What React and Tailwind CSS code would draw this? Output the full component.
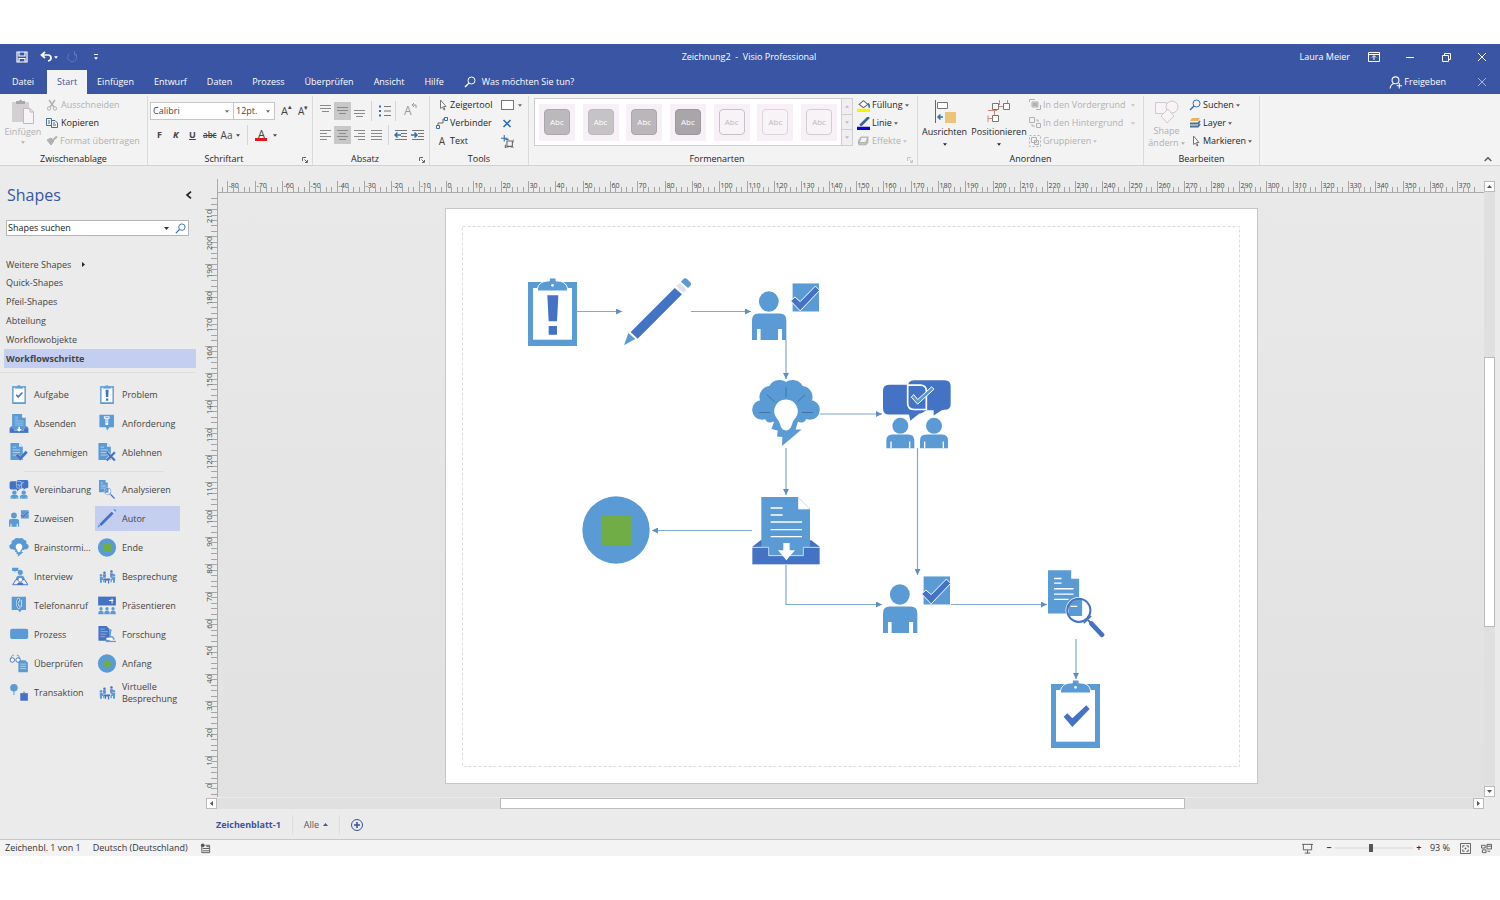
import React, { useState } from "react";
import clsx from "clsx";

const LIGHT = "#5b9bd5";
const DARK = "#4472c4";

/* ---------- shape drawings ---------- */

const Clipboard = () => (
  <>
    <rect y="12" width="147" height="192" fill={LIGHT} />
    <rect x="15" y="30" width="117" height="155" fill="#fff" />
    <path d="M28 39C28 20 40 10 58 9H64V0H84V9H90C108 10 119 20 119 39Z" fill={LIGHT} stroke="#fff" strokeWidth="3" />
    <circle cx="73.5" cy="22" r="4" fill="#fff" />
  </>
);

const Doc = () => (
  <>
    <path d="M3 0H30L42 12V54H3Z" fill={LIGHT} />
    <path d="M30 0V12H42Z" fill="#fff" opacity=".8" />
    <path d="M10 13H21M10 22H33M10 30H33M10 38H28" stroke="#fff" strokeWidth="2" opacity=".8" />
  </>
);

const SHAPES = {
  problem: {
    box: "0 0 147 204",
    body: (
      <>
        <Clipboard />
        <path d="M58 52H91L87 130H62ZM62 144H87V170H62Z" fill={DARK} />
      </>
    ),
  },
  task: {
    box: "0 0 147 204",
    body: (
      <>
        <Clipboard />
        <path d="M38 110L49 100L64 115L106 76L116 87L64 141Z" fill={DARK} />
      </>
    ),
  },
  author: {
    box: "0 0 204 204",
    body: (
      <>
        <path d="M0 202L13 165L34 183Z" fill={LIGHT} />
        <path d="M20 162L152 30L174 49L41 182Z" fill={DARK} />
        <path d="M157 24L167 15L188 36L178 45Z" fill="#dce3ee" />
        <path d="M171 11L178 3Q184 -2 190 4L198 12Q204 18 199 23L192 30Z" fill={LIGHT} />
      </>
    ),
  },
  assign: {
    box: "0 0 206 172",
    body: (
      <>
        <ellipse cx="51" cy="56" rx="30" ry="31" fill={LIGHT} />
        <path d="M0 172V112Q0 92 20 92H84Q104 92 104 112V172H91V139H79V172H26V139H15V172Z" fill={LIGHT} />
        <path d="M123 1H203V86H123Z" fill={LIGHT} />
        <path d="M117 54L130 42L146 56L192 9L205 22L146 84Z" fill={DARK} stroke="#fff" strokeWidth="3" />
      </>
    ),
  },
  brainstorm: {
    box: "0 0 204 202",
    body: (
      <>
        <g fill={LIGHT}>
          <circle cx="30" cy="90" r="30" />
          <circle cx="55" cy="51" r="33" />
          <circle cx="82" cy="34" r="34" />
          <circle cx="122" cy="34" r="34" />
          <circle cx="149" cy="51" r="33" />
          <circle cx="174" cy="90" r="30" />
          <circle cx="54" cy="112" r="16" />
          <circle cx="148" cy="112" r="16" />
          <path d="M40 50H164L150 120L138 126L131 149H149L90 199L91 172L75 170L77 152L58 148L66 126L48 120Z" />
        </g>
        <path d="M102 59A35 35 0 0 1 131 114Q122 124 119 136Q116 152 102 152Q88 152 85 136Q82 124 73 114A35 35 0 0 1 102 59Z" fill="#fff" />
        <path d="M102 22V52M44 44L68 66M160 44L136 66M20 98H54M150 98H184" stroke="#3f72ad" strokeWidth="3" fill="none" />
      </>
    ),
  },
  agreement: {
    box: "0 0 204 206",
    body: (
      <>
        <path d="M18 14H112Q130 14 130 32V85Q125 98 108 101L82 122L78 103H18Q0 103 0 85V32Q0 14 18 14Z" fill={DARK} />
        <path d="M93 0H185Q203 0 203 18V72Q203 88 185 89L176 90L152 106V90H75V18Q75 0 93 0Z" fill={DARK} />
        <path d="M130 32V90L112 100L84 88Z" fill={DARK} />
        <path d="M74 15H112Q130 15 130 32V88H94Q74 88 74 70Z" fill="none" stroke="#fff" strokeWidth="5" />
        <path d="M85 51L92 43L104 58L146 20L153 27L104 72Z" fill={LIGHT} stroke="#fff" strokeWidth="3" />
        <g fill={LIGHT}>
          <circle cx="52" cy="137" r="24" />
          <circle cx="153" cy="137" r="24" />
          <path d="M10 204V182Q10 163 28 163H76Q94 163 94 182V204Z" />
          <path d="M111 204V182Q111 163 129 163H177Q195 163 195 182V204Z" />
        </g>
        <path d="M24 184V204M80 184V204M125 184V204M181 184V204" stroke="#fff" strokeWidth="4" />
      </>
    ),
  },
  send: {
    box: "0 0 204 204",
    body: (
      <>
        <path d="M0 150L26 130H178L204 150Z" fill={DARK} />
        <path d="M28 0H138V37H174V176H28Z" fill={LIGHT} />
        <path d="M138 0L174 37H138Z" fill="#fff" stroke={LIGHT} strokeWidth="1" />
        <path d="M56 33H92M56 54H92M56 75H150M56 98H150M56 119H150" stroke="#fff" strokeWidth="4" />
        <path d="M0 151H50V176H154V151H204V203H0Z" fill={DARK} stroke="#fff" strokeWidth="2" />
        <path d="M94 138H113V160H129L103 190L78 160H94Z" fill="#fff" />
      </>
    ),
  },
  end: {
    box: "0 0 204 204",
    body: (
      <>
        <circle cx="102" cy="102" r="101" fill={LIGHT} />
        <rect x="58" y="57" width="90" height="91" fill="#70ad47" />
      </>
    ),
  },
  analyse: {
    box: "0 0 172 204",
    body: (
      <>
        <path d="M0 0H70V26H94V131H0Z" fill={LIGHT} />
        <circle cx="93" cy="121" r="40" fill="#fff" />
        <path d="M60 104L76 88L103 86V138H64Z" fill={LIGHT} />
        <path d="M18 25H41M18 39H41M18 56H77M18 72H77M18 88H62M68 109H88" stroke="#fff" strokeWidth="4" />
        <circle cx="93" cy="121" r="35" fill="none" stroke={DARK} strokeWidth="6" />
        <path d="M108 160L130 138" stroke={DARK} strokeWidth="5" />
        <path d="M120 150L128 158" stroke={DARK} strokeWidth="6" />
        <path d="M131 161L163 195" stroke={DARK} strokeWidth="14" strokeLinecap="round" />
      </>
    ),
  },
  request: {
    box: "0 0 60 60",
    body: (
      <>
        <path d="M6 2H52V42H38L30 52L27 42H6Z" fill={LIGHT} />
        <path d="M20 7H38V15H34V35H25V15H20Z" fill="#fff" opacity=".9" />
        <path d="M25 11H34M27 19H32M27 26H32" stroke={DARK} strokeWidth="2" />
      </>
    ),
  },
  approve: {
    box: "0 0 60 60",
    body: (
      <>
        <Doc />
        <path d="M18 40L26 33L34 42L51 24L58 31L34 56Z" fill={DARK} stroke="#ebebeb" strokeWidth="1" />
      </>
    ),
  },
  reject: {
    box: "0 0 60 60",
    body: (
      <>
        <Doc />
        <path d="M30 30L54 54M54 30L30 54" stroke="#ebebeb" strokeWidth="10" />
        <path d="M29 29L55 55M55 29L29 55" stroke={DARK} strokeWidth="7" />
      </>
    ),
  },
  interview: {
    box: "0 0 60 60",
    body: (
      <>
        <path d="M8 2H28V13H20L16 18V13H8Z" fill={LIGHT} />
        <circle cx="34" cy="17" r="8" fill={LIGHT} />
        <path d="M20 40Q20 27 34 27Q48 27 48 40Z" fill={LIGHT} />
        <path d="M10 56L20 40H48L58 56Z" fill="none" stroke={DARK} strokeWidth="3" />
        <circle cx="34" cy="40" r="7" fill="#fff" stroke={DARK} strokeWidth="2" />
        <path d="M24 57Q24 48 34 48Q44 48 44 57Z" fill={DARK} />
      </>
    ),
  },
  meeting: {
    box: "0 0 60 60",
    body: (
      <>
        <g fill={DARK}>
          <circle cx="22" cy="18" r="4" />
          <circle cx="44" cy="14" r="4" />
          <path d="M17 23H27L26 34H18ZM39 20H50L47 34H41Z" opacity=".8" />
          <path d="M20 36H40V41H37V52H33V43H27V50H23V41H20Z" />
        </g>
        <g fill={LIGHT}>
          <circle cx="11" cy="26" r="4" />
          <circle cx="52" cy="26" r="4" />
          <path d="M7 31H15L22 41V48H18V42L14 40V50H8ZM56 31H48L41 41V48H45V42L49 40V50H55Z" />
        </g>
      </>
    ),
  },
  phone: {
    box: "0 0 60 60",
    body: (
      <>
        <path d="M7 2H52V44H38L33 52L27 44H7Z" fill={LIGHT} />
        <path d="M31 8H26Q17 24 27 39H32L34 32H29Q25 24 29 16H33Z" fill={DARK} stroke="#fff" strokeWidth="2" />
        <path d="M38 12V34" stroke="#fff" strokeWidth="2" />
      </>
    ),
  },
  present: {
    box: "0 0 60 60",
    body: (
      <>
        <path d="M2 2H58V30H2Z" fill={DARK} />
        <path d="M36 14H50M46 8V24" stroke="#fff" strokeWidth="3" />
        <g fill={LIGHT}>
          <circle cx="11" cy="40" r="5" />
          <circle cx="30" cy="40" r="5" />
          <circle cx="49" cy="40" r="5" />
          <path d="M2 58Q2 46 11 46Q20 46 20 58ZM21 58Q21 46 30 46Q39 46 39 58ZM40 58Q40 46 49 46Q58 46 58 58Z" />
        </g>
      </>
    ),
  },
  process: {
    box: "0 0 60 60",
    body: <rect x="2" y="12" width="57" height="32" rx="6" fill={LIGHT} />,
  },
  research: {
    box: "0 0 60 60",
    body: (
      <>
        <path d="M3 3H28L38 13V50H3Z" fill={DARK} />
        <path d="M9 13H24M9 21H32M9 29H28M9 37H24" stroke="#b9cbe9" strokeWidth="2" />
        <path d="M42 14L38 38M36 40Q50 32 52 46" stroke={LIGHT} strokeWidth="5" fill="none" />
        <path d="M26 52H58" stroke={LIGHT} strokeWidth="4" />
        <path d="M28 40H44V47H28Z" fill="#fff" />
      </>
    ),
  },
  review: {
    box: "0 0 60 60",
    body: (
      <>
        <path d="M28 20H50L58 28V58H28Z" fill={LIGHT} />
        <path d="M34 32H52M34 39H52M34 46H52" stroke="#fff" strokeWidth="2" opacity=".8" />
        <circle cx="9" cy="19" r="7" fill="#fff" stroke={DARK} strokeWidth="3" />
        <circle cx="27" cy="19" r="7" fill="#fff" stroke={DARK} strokeWidth="3" />
        <path d="M3 15L9 4H14M33 15L28 4H23" fill="none" stroke={DARK} strokeWidth="2" />
      </>
    ),
  },
  start: {
    box: "0 0 204 204",
    body: (
      <>
        <circle cx="102" cy="102" r="98" fill={LIGHT} />
        <circle cx="106" cy="104" r="38" fill="#70ad47" />
      </>
    ),
  },
  endSmall: {
    box: "0 0 204 204",
    body: (
      <>
        <circle cx="102" cy="102" r="98" fill={LIGHT} />
        <rect x="56" y="56" width="94" height="94" rx="24" fill="#70ad47" />
      </>
    ),
  },
  transaction: {
    box: "0 0 60 60",
    body: (
      <>
        <circle cx="14" cy="15" r="12" fill={LIGHT} />
        <path d="M14 26V38" stroke={LIGHT} strokeWidth="3" />
        <path d="M34 32H58V56H34Z" fill={DARK} />
        <path d="M42 28L46 34L50 28Z" fill={LIGHT} />
      </>
    ),
  },
};

const Shape = ({ name, ...props }) => (
  <svg viewBox={SHAPES[name].box} {...props}>
    {SHAPES[name].body}
  </svg>
);

/* ---------- small helpers ---------- */

const Icon = ({ size = 12, className, children }) => (
  <svg width={size} height={size} viewBox="0 0 12 12" fill="none" stroke="currentColor" className={clsx("shrink-0", className)}>
    {children}
  </svg>
);

const Caret = ({ className }) => (
  <svg width="5" height="3" viewBox="0 0 5 3" fill="currentColor" className={clsx("shrink-0", className)}>
    <path d="M0 0H5L2.5 3Z" />
  </svg>
);

const Magnifier = ({ size = 11, className }) => (
  <Icon size={size} className={className}>
    <circle cx="7.5" cy="4.5" r="3.5" />
    <path d="M5 7L1 11" strokeWidth="1.4" />
  </Icon>
);

const Launcher = ({ faded }) => (
  <button aria-label="Dialog öffnen" className={clsx("absolute right-1 bottom-0.5", faded ? "text-[#c4c4c4]" : "text-[#666]")}>
    <svg width="6" height="6" viewBox="0 0 6 6" fill="none" stroke="currentColor">
      <path d="M.5 4V.5H4M2.5 2.5L5 5M5.5 3V5.5H3" />
    </svg>
  </button>
);

const Group = ({ title, className, launcher, faded, children }) => (
  <section className={clsx("relative flex shrink-0 flex-col border-r border-[#dadada]", className)}>
    <div className="flex h-[55px] shrink-0">{children}</div>
    <h2 className={clsx("h-3.5 text-center leading-4", launcher && "pr-3")}>{title}</h2>
    {launcher && <Launcher faded={faded} />}
  </section>
);

const Tool = ({ icon, label, caret, off, className, gap = "gap-0.5" }) => (
  <button className={clsx("flex h-[18px] items-center whitespace-nowrap", gap, off ? "text-[#b1b1b1]" : "text-[#262626]", className)}>
    {icon}
    <span>{label}</span>
    {caret && <Caret className="w-1 opacity-70" />}
  </button>
);

const Divider = ({ className }) => <span className={clsx("block h-5 w-px shrink-0 bg-[#d5d5d5]", className)} />;

/* ---------- title bar and tabs ---------- */

const TABS = ["Datei", "Start", "Einfügen", "Entwurf", "Daten", "Prozess", "Überprüfen", "Ansicht", "Hilfe"];

const TitleBar = () => (
  <div className="flex h-[26px] shrink-0 items-center bg-[#3955a3] text-white">
    <div className="flex flex-1 items-center pl-4">
      <button aria-label="Speichern">
        <Icon>
          <path d="M1 1H11V11H1ZM3 1V5H9V1M3 11V7.500H9V11" strokeWidth="1.2" />
        </Icon>
      </button>
      <button aria-label="Rückgängig" className="ml-3 flex items-center gap-0.5">
        <Icon>
          <path d="M5 1L1.500 4L5 7M2 4H8Q11 4 11 7Q11 9.500 8 10" strokeWidth="1.700" />
        </Icon>
        <Caret className="w-1" />
      </button>
      <button aria-label="Wiederholen" className="ml-2 text-[#6078bd]">
        <Icon>
          <path d="M8 2A4.500 4.500 0 1 1 3.500 2.500M8.500 0V4H11" />
        </Icon>
      </button>
      <button aria-label="Schnellzugriff anpassen" className="ml-4 flex flex-col items-center gap-0.5">
        <span className="h-px w-1 bg-white" />
        <Caret className="w-1" />
      </button>
    </div>
    <h1 className="pr-1.5">Zeichnung2&nbsp; -&nbsp; Visio Professional</h1>
    <div className="flex flex-1 items-center justify-end pr-3">
      <span>Laura Meier</span>
      <button aria-label="Menüband anzeigen" className="ml-[18px]">
        <Icon>
          <path d="M.5 1.500H11.500V10.500H.5ZM.5 3.500H11.500M6 9V5M4 6.500L6 4.500L8 6.500" />
        </Icon>
      </button>
      <button aria-label="Minimieren" className="ml-6">
        <Icon>
          <path d="M2 6.500H10" />
        </Icon>
      </button>
      <button aria-label="Verkleinern" className="ml-6">
        <Icon>
          <path d="M2.500 4.500H8.500V10.500H2.500ZM4.500 4V2.500H10.500V8.500H9" />
        </Icon>
      </button>
      <button aria-label="Schließen" className="ml-6">
        <Icon>
          <path d="M2 2L10 10M10 2L2 10" />
        </Icon>
      </button>
    </div>
  </div>
);

const TabBar = ({ tab, setTab }) => (
  <nav className="flex h-6 shrink-0 items-stretch bg-[#3955a3] pl-0.5 text-white">
    {TABS.map((t) => (
      <button
        key={t}
        onClick={() => setTab(t)}
        className={clsx("px-2.5 first:mr-[3px]", tab === t && "bg-[#f3f3f3] text-[#3955a3]")}
      >
        {t}
      </button>
    ))}
    <button className="ml-2.5 flex items-center gap-1.5">
      <Magnifier size={12} />
      Was möchten Sie tun?
    </button>
    <button className="mr-[30px] ml-auto flex items-center gap-0.5">
      <Icon size={13}>
        <circle cx="6" cy="4" r="3.200" />
        <path d="M1 11.500Q1.500 7.500 5 7M7 9H12M9.500 6.500V11.500" />
      </Icon>
      Freigeben
    </button>
    <button aria-label="Dokument schließen" className="mr-3 text-[#a9b6dc]">
      <Icon>
        <path d="M2 2L10 10M10 2L2 10" />
      </Icon>
    </button>
  </nav>
);

/* ---------- ribbon ---------- */

const PasteIcon = () => (
  <svg width="24" height="26" viewBox="0 0 24 26">
    <path d="M1 3H18V23H1Z" fill="#d2d0d2" />
    <path d="M5 2H8Q9.500 -1 11 2H14V5H5Z" fill="#a9a9a9" />
    <path d="M12.500 9.500H19L22.500 13V24.500H12.500Z" fill="#f7f3f7" stroke="#bdb9bd" />
    <path d="M19 9.500V13H22.500" fill="none" stroke="#bdb9bd" />
  </svg>
);

const ClipboardGroup = () => (
  <Group title="Zwischenablage" className="w-[148px]">
    <button className="flex w-[46px] flex-col items-center pt-[3px] text-[#b1b1b1]">
      <PasteIcon />
      <span>Einfügen</span>
      <Caret className="mt-0.5 w-1" />
    </button>
    <div>
      <Tool off label="Ausschneiden" gap="gap-[3px]" icon={
        <Icon>
          <path d="M3 1L8 8M9 1L4 8" strokeWidth="1.500" />
          <circle cx="3" cy="9.500" r="1.700" />
          <circle cx="9" cy="9.500" r="1.700" />
        </Icon>
      } />
      <Tool label="Kopieren" gap="gap-[3px]" icon={
        <Icon className="text-[#4d6f94]">
          <path d="M.5 1.500H5.500V8.500H.5ZM5.500 3.500H9L11.500 6V10.500H5.500ZM2 4H4M2 6H4M7 6H9M7 8H10" />
        </Icon>
      } />
      <Tool off label="Format übertragen" icon={
        <Icon>
          <path d="M1 5L5 3L8 6L5 10Z" fill="currentColor" />
          <path d="M7 5L11 1.500" strokeWidth="2" />
        </Icon>
      } />
    </div>
  </Group>
);

const Select = ({ label, value, options, className }) => (
  <div className={clsx("flex h-[18px] items-center border border-[#c6c6c6] bg-white pr-1 pl-0.5", className)}>
    <select aria-label={label} defaultValue={value} className="min-w-0 flex-1 appearance-none bg-transparent text-[#444] outline-none">
      {options.map((o) => (
        <option key={o}>{o}</option>
      ))}
    </select>
    <Caret className="w-1 text-[#666]" />
  </div>
);

const FontGroup = () => (
  <Group title="Schriftart" className="w-[165px]" launcher>
    <div className="w-full pt-[3px] pl-0.5 text-[#444]">
      <div className="flex h-6 items-center">
        <Select label="Schriftart" value="Calibri" options={["Calibri", "Arial"]} className="w-[84px]" />
        <Select label="Schriftgrad" value="12pt." options={["10pt.", "12pt.", "14pt."]} className="-ml-px w-[42px]" />
        <button aria-label="Schrift vergrößern" className="ml-1.5 flex items-start text-[11px]">
          A<span className="text-[7px] leading-2">▴</span>
        </button>
        <button aria-label="Schrift verkleinern" className="ml-1.5 flex items-start text-[10px]">
          A<span className="text-[7px] leading-2">▾</span>
        </button>
      </div>
      <div className="flex h-6 items-center pl-[7px]">
        <button className="w-3 text-left font-bold">F</button>
        <button className="ml-1 w-3 text-left font-bold italic">K</button>
        <button className="ml-1 w-3 text-left font-bold underline">U</button>
        <button className="ml-0.5 text-[8px] font-semibold line-through">abc</button>
        <button className="ml-1 flex items-center gap-1 text-[10px]">Aa <Caret className="w-1" /></button>
        <Divider className="mx-[7px]" />
        <button aria-label="Schriftfarbe" className="flex items-center gap-1.5">
          <span className="h-3 w-3 border-b-3 border-[#e3171b] text-center text-[11px] leading-[10px]">A</span>
          <Caret className="w-1" />
        </button>
      </div>
    </div>
  </Group>
);

const LINES = {
  top: "M1 1.500H12M1 4.500H12M3 7.500H10",
  middle: "M1 3.500H12M1 6.500H12M3 9.500H10",
  bottom: "M1 6.500H12M1 9.500H12M3 12.500H10",
  left: "M1 2.500H12M1 5.500H8M1 8.500H12M1 11.500H8",
  center: "M1 2.500H12M3 5.500H10M1 8.500H12M3 11.500H10",
  right: "M1 2.500H12M5 5.500H12M1 8.500H12M5 11.500H12",
  justify: "M1 2.500H12M1 5.500H12M1 8.500H12M1 11.500H12",
};

const Lines = ({ kind, on }) => (
  <button aria-label={kind} className={clsx("flex h-[18px] w-[17px] shrink-0 items-center justify-center text-[#8a8a8a]", on && "bg-[#c8c8c8]")}>
    <svg width="13" height="14" viewBox="0 0 13 14" fill="none" stroke="currentColor">
      <path d={LINES[kind]} />
    </svg>
  </button>
);

const Indent = ({ out }) => (
  <button aria-label={out ? "Einzug verkleinern" : "Einzug vergrößern"} className="flex w-[17px] justify-center">
    <svg width="14" height="12" viewBox="0 0 14 12" fill="none">
      <path d="M1 1.500H13M7 4.500H13M7 7.500H13M1 10.500H13" stroke="#777" />
      <path d={out ? "M7 6H1M3.500 3.500L1 6L3.500 8.500" : "M0 6H6M3.500 3.500L6 6L3.500 8.500"} stroke="#2f6fb0" strokeWidth="1.500" />
    </svg>
  </button>
);

const ParagraphGroup = () => (
  <Group title="Absatz" className="w-[117px]" launcher>
    <div className="pt-[3px] pl-1">
      <div className="flex h-6 items-center">
        <Lines kind="top" />
        <Lines kind="middle" on />
        <Lines kind="bottom" />
        <Divider className="mx-[3px]" />
        <button aria-label="Aufzählung" className="mx-1">
          <svg width="12" height="12" viewBox="0 0 12 12" fill="none">
            <path d="M5 1.500H12M5 6H12M5 10.500H12" stroke="#777" />
            <path d="M0 1.500H2M0 6H2M0 10.500H2" stroke="#2f6fb0" strokeWidth="2" />
          </svg>
        </button>
        <Divider />
        <button aria-label="Text drehen" className="ml-2 flex text-xs text-[#999]">
          A
          <svg width="5" height="6" viewBox="0 0 5 6" fill="none" stroke="currentColor">
            <path d="M0 2H4V5M2 0L0 2L2 4" />
          </svg>
        </button>
      </div>
      <div className="flex h-6 items-center">
        <Lines kind="left" />
        <Lines kind="center" on />
        <Lines kind="right" />
        <Lines kind="justify" />
        <Divider className="mx-[3px]" />
        <Indent out />
        <Indent />
      </div>
    </div>
  </Group>
);

const Pointer = ({ className }) => (
  <Icon className={className}>
    <path d="M4.500 1V9.500L6.500 8L8 11L9 10.500L7.500 7.500H10Z" fill="#fff" />
  </Icon>
);

const ToolsGroup = () => (
  <Group title="Tools" className="w-[99px]">
    <div className="flex w-[71px] flex-col items-start pl-1.5">
      <Tool label="Zeigertool" icon={<Pointer className="text-[#777]" />} />
      <Tool label="Verbinder" icon={
        <Icon>
          <path d="M.5 8.500H3.500V11.500H.5ZM8.500 .5H11.500V3.500H8.500Z" stroke="#2f6fb0" />
          <path d="M2 8V6H7V2H8" stroke="#666" />
        </Icon>
      } />
      <Tool label="Text" icon={<span className="w-3 text-center text-[10px] text-[#444]">A</span>} />
    </div>
    <div className="flex flex-col items-start">
      <button aria-label="Rechteck" className="flex h-[18px] items-center gap-1 text-[#666]">
        <span className="h-2.5 w-[13px] border border-[#777] bg-white" />
        <Caret className="w-1" />
      </button>
      <button aria-label="Verbindungspunkt" className="flex h-[18px] items-center text-[#2f6fb0]">
        <Icon>
          <path d="M2.500 3L9.500 10M9.500 3L2.500 10" strokeWidth="1.600" />
        </Icon>
      </button>
      <button aria-label="Textblock" className="flex h-[18px] items-center">
        <Icon size={13}>
          <path d="M5.500 5.500H10.500V10.500H5.500ZM4 4H7M4 12H7M9 12H12M12 4V7M4 9V12" stroke="#666" />
          <path d="M3 0V6M0 3H6" stroke="#2f6fb0" />
        </Icon>
      </button>
    </div>
  </Group>
);

const STYLES = [
  "bg-[#bcb9bc] border-[#aaa7aa] text-white",
  "bg-[#c6c3c6] border-[#bcb9bc] text-white",
  "bg-[#bab7ba] border-[#aaa7aa] text-white",
  "bg-[#a9a6a9] border-[#9b989b] text-white",
  "bg-[#f7f3f7] border-[#c6c2c6] text-[#bbb]",
  "bg-[#f7f3f7] border-[#dad6da] text-[#bbb]",
  "bg-[#f7f3f7] border-[#d0ccd0] text-[#bbb]",
];

const StylesGroup = () => (
  <Group title="Formenarten" className="w-[389px]" launcher faded>
    <div className="mt-0.5 ml-[5px] flex h-[48px] w-[319px] border border-[#cfcfcf] bg-white">
      <div className="flex flex-1 items-center justify-around">
        {STYLES.map((s, i) => (
          <button key={i} className="flex h-[37px] w-9 items-center justify-center bg-[#f7f1f7]">
            <span className={clsx("flex size-[26px] items-center justify-center rounded-sm border text-[8px]", s)}>Abc</span>
          </button>
        ))}
      </div>
      <div className="flex w-[11px] flex-col divide-y divide-[#cfcfcf] border-l border-[#cfcfcf] bg-[#f0eef0] text-[#bbb]">
        <button aria-label="Nach oben" className="flex flex-1 items-center justify-center"><Caret className="w-1 rotate-180" /></button>
        <button aria-label="Nach unten" className="flex flex-1 items-center justify-center"><Caret className="w-1" /></button>
        <button aria-label="Mehr" className="flex flex-1 items-center justify-center"><Caret className="w-1" /></button>
      </div>
    </div>
    <div className="flex flex-col items-start pl-1">
      <Tool label="Füllung" caret icon={
        <Icon size={13}>
          <path d="M2 5L6 1.500L10 5L6 8Z" fill="#fff" stroke="#667" />
          <path d="M10 4Q12 6 11 8" stroke="#2f6fb0" strokeWidth="1.500" />
          <path d="M0 10.500H12" stroke="#f4f400" strokeWidth="3" />
        </Icon>
      } />
      <Tool label="Linie" caret icon={
        <Icon size={13}>
          <path d="M11 0L5 6L3 8" stroke="#3f6490" strokeWidth="2.500" />
          <path d="M0 10.500H12" stroke="#0404e0" strokeWidth="3" />
        </Icon>
      } />
      <Tool label="Effekte" caret off icon={
        <Icon size={13}>
          <path d="M2 9Q0 5 4 2H10V7L8 9Z" fill="#ccc" />
          <path d="M4 2H10L8 7H2Z" fill="#f3f3f3" />
        </Icon>
      } />
    </div>
  </Group>
);

const ArrangeGroup = () => (
  <Group title="Anordnen" className="w-[226px]">
    <button className="flex w-[53px] flex-col items-center pt-1 text-[#262626]">
      <svg width="24" height="25" viewBox="0 0 24 25" fill="none">
        <path d="M2.500 0V23" stroke="#666" />
        <path d="M4.500 2.500H14.500V8.500H4.500Z" stroke="#777" fill="#fff" />
        <path d="M12 12H23V23H12Z" fill="#ecc477" />
        <path d="M10 17H5M7.500 14.500L5 17L7.500 19.500" stroke="#2f6fb0" strokeWidth="1.500" />
      </svg>
      <span>Ausrichten</span>
      <Caret className="mt-1 w-1" />
    </button>
    <button className="flex w-14 flex-col items-center pt-1 text-[#262626]">
      <svg width="24" height="25" viewBox="0 0 24 25" fill="none">
        <path d="M12.500 0V5M20.500 0V3M11 6.500H17M1 10.500H10M7.500 10V16M1 15.500V22M1 18.500H5" stroke="#d08a7e" />
        <path d="M5.500 3.500H11.500V9.500H5.500ZM16.500 3.500H22.500V9.500H16.500ZM5.500 15.500H11.500V21.500H5.500Z" stroke="#777" fill="#fff" />
      </svg>
      <span>Positionieren</span>
      <Caret className="mt-1 w-1" />
    </button>
    <div className="ml-0.5 flex w-[106px] flex-col items-start">
      <Tool off caret className="w-full [&>svg:last-child]:ml-auto" label="In den Vordergrund" icon={
        <Icon><path d="M.5 3V.5H6M3 3H9V8H3ZM11.500 6V10.500H7" /><path d="M4 4H8V7H4Z" fill="currentColor" /></Icon>
      } />
      <Tool off caret className="w-full [&>svg:last-child]:ml-auto" label="In den Hintergrund" icon={
        <Icon><path d="M.5 .5H5.500V5.500H.5ZM7.500 6.500H11.500V10.500H7.500ZM3 7V9H6M7 3H9V5" /></Icon>
      } />
      <Tool off caret label="Gruppieren" icon={
        <Icon><path d="M2.500 2.500H7.500V7.500H2.500ZM5.500 5.500H9.500V9.500H5.500Z" /><path d="M.5 .5H11.500V11.500H.5Z" strokeDasharray="2 2" /></Icon>
      } />
    </div>
  </Group>
);

const EditGroup = () => (
  <Group title="Bearbeiten" className="w-[116px]">
    <button className="flex w-[45px] flex-col items-center pt-1 text-[#b1b1b1]">
      <svg width="24" height="25" viewBox="0 0 24 25" fill="#f7f3f7" stroke="#cdc9cd">
        <path d="M.5 2.500H11.500V13.500H.5Z" />
        <circle cx="17" cy="7" r="6" />
        <path d="M6 16L13 9L19 16L12 23Z" />
      </svg>
      <span className="leading-3">Shape</span>
      <span className="flex items-center gap-0.5 leading-3">ändern <Caret className="w-1" /></span>
    </button>
    <div className="flex flex-col items-start">
      <Tool label="Suchen" caret icon={<Magnifier size={12} className="text-[#2f6fb0]" />} />
      <Tool label="Layer" caret icon={
        <Icon>
          <path d="M3 1H11L9 4H1Z" fill="#ecb35c" stroke="none" />
          <path d="M1 6.500H9L11 4M1 9.500H9L11 7" stroke="#4d6f94" strokeWidth="1.800" />
        </Icon>
      } />
      <Tool label="Markieren" caret icon={<Pointer className="text-[#777]" />} />
    </div>
  </Group>
);

const Ribbon = () => (
  <div className="flex h-[72px] shrink-0 border-b border-[#d2d2d2] bg-[#f3f3f3] pt-0.5 text-[#262626]">
    <ClipboardGroup />
    <FontGroup />
    <ParagraphGroup />
    <ToolsGroup />
    <StylesGroup />
    <ArrangeGroup />
    <EditGroup />
    <button aria-label="Menüband reduzieren" className="mr-2 mb-0.5 ml-auto self-end text-[#555]">
      <Icon size={8}>
        <path d="M1 9L6 4L11 9" strokeWidth="2" />
      </Icon>
    </button>
  </div>
);

/* ---------- shapes pane ---------- */

const STENCILS = ["Quick-Shapes", "Pfeil-Shapes", "Abteilung", "Workflowobjekte", "Workflowschritte"];

const BASIC = [
  ["task", "Aufgabe"],
  ["problem", "Problem"],
  ["send", "Absenden"],
  ["request", "Anforderung"],
  ["approve", "Genehmigen"],
  ["reject", "Ablehnen"],
];

const MORE = [
  ["agreement", "Vereinbarung"],
  ["analyse", "Analysieren"],
  ["assign", "Zuweisen"],
  ["author", "Autor"],
  ["brainstorm", "Brainstormi..."],
  ["endSmall", "Ende"],
  ["interview", "Interview"],
  ["meeting", "Besprechung"],
  ["phone", "Telefonanruf"],
  ["present", "Präsentieren"],
  ["process", "Prozess"],
  ["research", "Forschung"],
  ["review", "Überprüfen"],
  ["start", "Anfang"],
  ["transaction", "Transaktion"],
  ["meeting", "Virtuelle Besprechung"],
];

const Palette = ({ items, picked, setPicked }) => (
  <div className="grid grid-cols-[88px_85px] pl-[7px]">
    {items.map(([shape, label]) => (
      <div key={label} className="flex h-[29px] items-center">
        <button
          onClick={() => setPicked(label)}
          className={clsx("flex h-[25px] w-full items-center gap-[5px] pl-0.5 text-left leading-3", picked === label && "bg-[#c3cef0]")}
        >
          <Shape name={shape} className="h-[19px] w-5 shrink-0" />
          <span>{label}</span>
        </button>
      </div>
    ))}
  </div>
);

const ShapesPane = () => {
  const [stencil, setStencil] = useState("Workflowschritte");
  const [picked, setPicked] = useState("Autor");

  return (
    <aside className="w-[204px] shrink-0 pt-[15px] text-[#444]">
      <div className="flex h-7 items-center justify-between pr-[11px] pl-[7px]">
        <h2 className="text-[16px] text-[#3955a3]">Shapes</h2>
        <button aria-label="Bereich minimieren" className="text-[#222]">
          <Icon size={8}>
            <path d="M9 1L3 6L9 11" strokeWidth="2.500" />
          </Icon>
        </button>
      </div>
      <div className="mt-[11px] mr-[15px] ml-1.5 flex h-4 items-center border border-[#b5b5b5] bg-white pr-0.5">
        <input aria-label="Shapes suchen" defaultValue="Shapes suchen" className="min-w-0 flex-1 pl-px text-[#222] outline-none" />
        <Caret className="text-[#333]" />
        <button aria-label="Suchen" className="ml-1.5 text-[#2f6fb0]">
          <Magnifier size={11} />
        </button>
      </div>
      <div className="mt-5 mr-2 ml-1 flex flex-col">
        <button className="flex h-[17px] items-center gap-2.5 pl-0.5">
          Weitere Shapes
          <Caret className="-rotate-90 text-[#222]" />
        </button>
        {STENCILS.map((s) => (
          <button
            key={s}
            onClick={() => setStencil(s)}
            className={clsx("h-[19px] pl-0.5 text-left leading-[18px]", s === stencil && "bg-[#c3cef0] font-bold")}
          >
            {s}
          </button>
        ))}
      </div>
      <div className="mt-1 mr-2 mb-[7px] border-b border-[#dedede]" />
      <Palette items={BASIC} picked={picked} setPicked={setPicked} />
      <div className="mt-1 mr-10 mb-[3px] ml-6 border-b border-[#dedede]" />
      <Palette items={MORE} picked={picked} setPicked={setPicked} />
    </aside>
  );
};

/* ---------- drawing area ---------- */

// pixels per 10 mm at the current zoom
const STEP = 27.33;

const range = (from, to) => Array.from({ length: to - from + 1 }, (_, i) => from + i);

const TopRuler = () => (
  <svg width="100%" height="14" className="block border-b border-[#aaa]" fontSize="7" fill="#444">
    {range(-41, 188).map((n) => {
      const x = Math.round(228 + (n * STEP) / 5) + 0.5;
      const major = n % 5 === 0;
      return (
        <g key={n}>
          <path d={`M${x} ${major ? 2 : 8}V14`} stroke="#a5a5a5" />
          {major && <text x={x + 1} y="9">{n * 2}</text>}
        </g>
      );
    })}
  </svg>
);

const SideRuler = () => (
  <svg width="14" height="100%" className="block border-r border-[#aaa]" fontSize="8" fill="#444">
    {range(-2, 107).map((n) => {
      const y = Math.round(590 - (n * STEP) / 5) + 0.5;
      const major = n % 5 === 0;
      return (
        <g key={n}>
          <path d={`M${major ? 1 : 7} ${y}H14`} stroke="#a5a5a5" />
          {major && (
            <text transform={`translate(8 ${y}) rotate(-90)`} textAnchor="end">
              {n * 2}
            </text>
          )}
        </g>
      );
    })}
  </svg>
);

const LINKS = [
  "M577 311.500H622",
  "M691 311.500H751",
  "M786 340V379",
  "M820 414H882",
  "M786 448V495",
  "M752 530.500H652",
  "M786 565V604.500H882",
  "M917.500 448V575",
  "M951 604.500H1047",
  "M1076 639V679",
];

const NODES = [
  ["problem", 528, 278, 49, 68],
  ["author", 624, 278, 68, 68],
  ["assign", 752, 283, 68, 57],
  ["brainstorm", 752, 380, 68, 67],
  ["agreement", 883, 380, 68, 69],
  ["send", 752, 497, 68, 68],
  ["end", 582, 496, 68, 68],
  ["assign", 883, 576, 68, 57],
  ["analyse", 1048, 570, 57, 68],
  ["task", 1051, 680, 49, 68],
];

const Page = () => (
  <svg viewBox="446 209 811 574" className="w-[811px] shrink-0 bg-white outline outline-[#c6c6c6]">
    <defs>
      <marker id="tip" viewBox="0 0 6 6" refX="6" refY="3" markerWidth="6" markerHeight="6" orient="auto" markerUnits="userSpaceOnUse">
        <path d="M0 0L6 3L0 6Z" fill="#5f8fc2" />
      </marker>
    </defs>
    <rect x="462.500" y="226.500" width="777" height="540" fill="none" stroke="#dcdcdc" strokeDasharray="3 2" />
    {LINKS.map((d) => (
      <path key={d} d={d} fill="none" stroke="#7fa8d2" strokeWidth="1.200" markerEnd="url(#tip)" />
    ))}
    {NODES.map(([name, x, y, width, height]) => (
      <Shape key={`${x}-${y}`} name={name} x={x} y={y} width={width} height={height} />
    ))}
  </svg>
);

const ScrollButton = ({ label, turn }) => (
  <button aria-label={label} className="flex size-[11px] shrink-0 items-center justify-center border border-[#bbb] bg-white text-[#555]">
    <Caret className={turn} />
  </button>
);

const Workspace = () => (
  <main className="flex min-w-0 flex-1 flex-col pt-[13px]">
    <div className="grid min-h-0 flex-1 grid-cols-[14px_1fr_16px] grid-rows-[14px_1fr_13px]">
      <div className="border-r border-[#aaa]" />
      <div className="min-w-0 overflow-hidden"><TopRuler /></div>
      <div className="row-span-2 flex flex-col pt-0.5">
        <ScrollButton label="Nach oben" turn="rotate-180" />
        <div className="flex w-[11px] flex-1 flex-col bg-[#e0e0e0]">
          <div className="flex-[165]" />
          <div className="flex-[269] border border-[#bbb] bg-white" />
          <div className="flex-[159]" />
        </div>
        <ScrollButton label="Nach unten" />
      </div>
      <div className="min-h-0 overflow-hidden"><SideRuler /></div>
      <div className="flex min-h-0 min-w-0 items-center justify-center overflow-hidden bg-linear-to-b from-[#e9e9e9] to-[#e1e1e1] pt-0.5 pl-px">
        <Page />
      </div>
      <div className="col-span-2 flex items-center pl-0.5">
        <ScrollButton label="Nach links" turn="rotate-90" />
        <div className="flex h-[11px] flex-1 bg-[#e0e0e0]">
          <div className="flex-[283]" />
          <div className="flex-[683] border border-[#bbb] bg-white" />
          <div className="flex-[288]" />
        </div>
        <ScrollButton label="Nach rechts" turn="-rotate-90" />
      </div>
    </div>
    <div className="flex h-[29px] items-center pl-3 text-[#555]">
      <button className="font-bold text-[#3955a3]">Zeichenblatt-1</button>
      <span className="mx-[11px] h-5 w-px bg-[#dfdfdf]" />
      <button className="flex items-center gap-1">
        Alle <Caret className="rotate-180 text-[#3955a3]" />
      </button>
      <span className="mx-[11px] h-5 w-px bg-[#dfdfdf]" />
      <button aria-label="Neues Zeichenblatt" className="text-[#3955a3]">
        <Icon>
          <circle cx="6" cy="6" r="5.500" />
          <path d="M3 6H9M6 3V9" strokeWidth="1.600" />
        </Icon>
      </button>
    </div>
  </main>
);

const StatusBar = () => (
  <footer className="flex h-[17px] shrink-0 items-center border-t border-[#c6c6c6] bg-[#f3f3f3] pr-2 pl-[5px] text-[#333]">
    <span>Zeichenbl. 1 von 1</span>
    <span className="ml-3">Deutsch (Deutschland)</span>
    <button aria-label="Makro aufzeichnen" className="ml-3 text-[#555]">
      <Icon size={11}>
        <path d="M2 4V10.500H10.500V2.500H6M3 6H10M3 8.500H10M7 4H10" />
        <circle cx="3" cy="2.500" r="2" fill="currentColor" stroke="none" />
      </Icon>
    </button>
    <button aria-label="Präsentationsmodus" className="ml-auto text-[#555]">
      <Icon size={11}>
        <path d="M0 1.500H12M1.500 2V7.500H10.500V2M6 8V11M3 11H9" />
      </Icon>
    </button>
    <button aria-label="Verkleinern" className="ml-3 w-2 font-bold">−</button>
    <input
      type="range"
      aria-label="Zoom"
      min="0"
      max="100"
      defaultValue="46"
      className="mx-0.5 h-3 w-[78px] appearance-none bg-linear-to-b from-transparent from-45% via-[#999] via-50% to-transparent to-55% [&::-webkit-slider-thumb]:h-2 [&::-webkit-slider-thumb]:w-1 [&::-webkit-slider-thumb]:appearance-none [&::-webkit-slider-thumb]:bg-[#555]"
    />
    <button aria-label="Vergrößern" className="w-2 font-bold">+</button>
    <span className="ml-[7px]">93 %</span>
    <button aria-label="An Fenster anpassen" className="ml-2.5 text-[#555]">
      <Icon size={11}>
        <path d="M.5 .5H11.500V11.500H.5ZM3 5V3H5M7 3H9V5M9 7V9H7M5 9H3V7M5 6H7M6 5V7" />
      </Icon>
    </button>
    <button aria-label="Fenster wechseln" className="ml-2.5 text-[#555]">
      <Icon size={11}>
        <path d="M.5 2.500H4.500V5.500H.5ZM6.500 1.500H11.500V6.500H6.500ZM1.500 7.500H5.500V10.500H1.500ZM7 9H10M6.500 3.500H11.500" />
      </Icon>
    </button>
  </footer>
);

export default function App() {
  const [tab, setTab] = useState("Start");

  return (
    <div className="h-screen bg-white py-11 font-['Open_Sans','Noto_Sans',sans-serif] text-[9px]">
      <div className="flex h-full flex-col bg-[#ebebeb]">
        <TitleBar />
        <TabBar tab={tab} setTab={setTab} />
        <Ribbon />
        <div className="flex min-h-0 flex-1">
          <ShapesPane />
          <Workspace />
        </div>
        <StatusBar />
      </div>
    </div>
  );
}
